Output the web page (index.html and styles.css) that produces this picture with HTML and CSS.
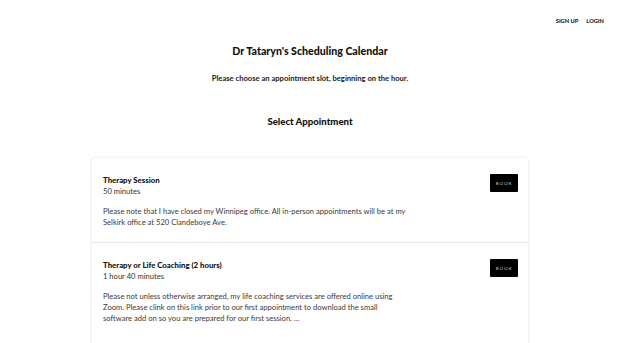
FILE: index.html
```html
<!DOCTYPE html>
<html lang="en">
<head>
<meta charset="utf-8">
<title>Dr Tataryn's Scheduling Calendar</title>
<link rel="stylesheet" href="styles.css">
</head>
<body>
<header class="topbar">
  <nav class="nav">
    <a class="nav-link" href="#">Sign up</a>
    <a class="nav-link" href="#">Login</a>
  </nav>
</header>
<main class="main">
  <h1 class="title">Dr Tataryn's Scheduling Calendar</h1>
  <p class="intro">Please choose an appointment slot, beginning on the hour.</p>
  <h2 class="section-title">Select Appointment</h2>
  <section class="card">
    <article class="item">
      <div class="item-head">
        <div class="item-info">
          <div class="item-name">Therapy Session</div>
          <div class="item-duration">50 minutes</div>
        </div>
        <button class="book">Book</button>
      </div>
      <p class="item-desc">Please note that I have closed my Winnipeg office. All in-person appointments will be at my<br>Selkirk office at 520 Clandeboye Ave.</p>
    </article>
    <article class="item">
      <div class="item-head">
        <div class="item-info">
          <div class="item-name">Therapy or Life Coaching (2 hours)</div>
          <div class="item-duration">1 hour 40 minutes</div>
        </div>
        <button class="book">Book</button>
      </div>
      <p class="item-desc">Please not unless otherwise arranged, my life coaching services are offered online using<br>Zoom. Please clink on this link prior to our first appointment to download the small<br>software add on so you are prepared for our first session. ...</p>
      <a class="show-all" href="#">Show all</a>
    </article>
  </section>
</main>
</body>
</html>
```
FILE: styles.css
```css
* { box-sizing: border-box; }
html, body { margin: 0; padding: 0; background: #fff; }
body {
  font-family: "Lato", "Liberation Sans", sans-serif;
  color: #1b1b1b;
}
.topbar {
  height: 41px;
  display: flex;
  justify-content: flex-end;
  align-items: center;
  padding-right: 16px;
}
.nav { display: flex; gap: 8px; }
.nav-link {
  font-size: 5.7px;
  font-weight: 900;
  text-transform: uppercase;
  color: #222;
  text-decoration: none;
}
.main { display: flex; flex-direction: column; align-items: center; }
.title {
  margin: 2px 0 0;
  font-size: 10.6px;
  font-weight: 900;
  line-height: 16px;
  color: #111;
}
.intro {
  margin: 13px 0 0;
  font-size: 7.6px;
  font-weight: 700;
  line-height: 12px;
  color: #1b1b1b;
}
.section-title {
  margin: 31px 0 0;
  font-size: 9.6px;
  font-weight: 900;
  line-height: 14px;
  color: #111;
}
.card {
  margin-top: 29px;
  width: 436px;
  background: #fff;
  border-radius: 3px;
  box-shadow: 0 0 3px rgba(0,0,0,0.14), 0 1px 2px rgba(0,0,0,0.06);
}
.item {
  padding: 16px 10px 13px 11px;
  border-bottom: 1px solid #e6e6e6;
}
.item:last-child { border-bottom: none; }
.item-head { display: flex; justify-content: space-between; align-items: flex-start; }
.item-info { padding-top: 1px; }
.item-name {
  font-size: 7.8px;
  font-weight: 900;
  line-height: 11px;
  color: #111;
}
.item-duration {
  font-size: 7.6px;
  line-height: 10px;
  color: #333;
}
.book {
  width: 28px;
  height: 18px;
  padding: 0;
  border: none;
  border-radius: 1px;
  background: #000;
  color: #c4c4c4;
  font-family: inherit;
  font-size: 4.6px;
  letter-spacing: 0.8px;
  text-transform: uppercase;
}
.item-desc {
  margin: 10px 0 0;
  max-width: 330px;
  font-size: 7.6px;
  line-height: 11.3px;
  color: #3a3a3a;
}
.show-all {
  display: block;
  margin-top: 17px;
  font-size: 6.4px;
  font-weight: 900;
  text-transform: uppercase;
  color: #222;
  text-decoration: none;
}
```
